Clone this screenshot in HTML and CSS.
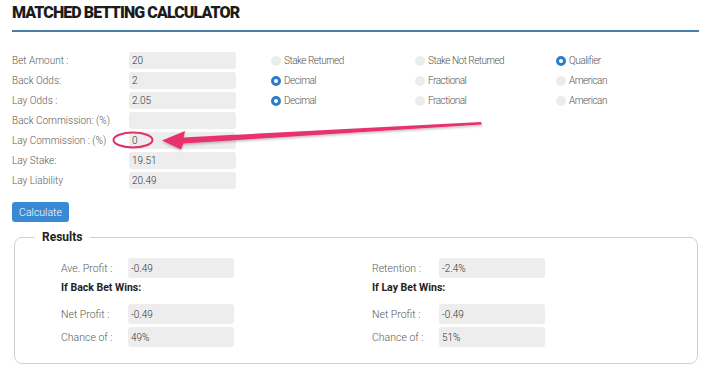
FILE: index.html
```html
<!DOCTYPE html>
<html lang="en">
<head>
    <meta charset="UTF-8">
    <title>Matched Betting Calculator</title>
    <link rel="stylesheet" href="styles.css">
</head>
<body>
    <div class="calculator">
        <h1 class="title">MATCHED BETTING CALCULATOR</h1>

        <div class="inputs">
            <div class="row">
                <label>Bet Amount :</label>
                <input type="text" class="field" value="20">
                <div class="options">
                    <span class="option"><span class="radio"></span>Stake Returned</span>
                    <span class="option"><span class="radio"></span>Stake Not Returned</span>
                    <span class="option"><span class="radio checked"></span>Qualifier</span>
                </div>
            </div>
            <div class="row">
                <label>Back Odds:</label>
                <input type="text" class="field" value="2">
                <div class="options">
                    <span class="option"><span class="radio checked"></span>Decimal</span>
                    <span class="option"><span class="radio"></span>Fractional</span>
                    <span class="option"><span class="radio"></span>American</span>
                </div>
            </div>
            <div class="row">
                <label>Lay Odds :</label>
                <input type="text" class="field" value="2.05">
                <div class="options">
                    <span class="option"><span class="radio checked"></span>Decimal</span>
                    <span class="option"><span class="radio"></span>Fractional</span>
                    <span class="option"><span class="radio"></span>American</span>
                </div>
            </div>
            <div class="row">
                <label>Back Commission: (%)</label>
                <input type="text" class="field" value="">
            </div>
            <div class="row">
                <label>Lay Commission : (%)</label>
                <input type="text" class="field" value="0">
            </div>
            <div class="row">
                <label>Lay Stake:</label>
                <input type="text" class="field" value="19.51">
            </div>
            <div class="row">
                <label>Lay Liability</label>
                <input type="text" class="field" value="20.49">
            </div>
        </div>

        <button class="calc-button">Calculate</button>

        <fieldset class="results">
            <legend>Results</legend>
            <div class="results-grid">
                <div class="result-col">
                    <div class="result-row">
                        <label>Ave. Profit :</label>
                        <input type="text" class="field" value="-0.49">
                    </div>
                    <h4>If Back Bet Wins:</h4>
                    <div class="result-row">
                        <label>Net Profit :</label>
                        <input type="text" class="field" value="-0.49">
                    </div>
                    <div class="result-row">
                        <label>Chance of :</label>
                        <input type="text" class="field" value="49%">
                    </div>
                </div>
                <div class="result-col">
                    <div class="result-row">
                        <label>Retention :</label>
                        <input type="text" class="field" value="-2.4%">
                    </div>
                    <h4>If Lay Bet Wins:</h4>
                    <div class="result-row">
                        <label>Net Profit :</label>
                        <input type="text" class="field" value="-0.49">
                    </div>
                    <div class="result-row">
                        <label>Chance of :</label>
                        <input type="text" class="field" value="51%">
                    </div>
                </div>
            </div>
        </fieldset>
    </div>

    <!-- annotation drawn over the screenshot -->
    <svg class="annotation" width="710" height="370" viewBox="0 0 710 370">
        <defs>
            <filter id="shadow" x="-10%" y="-50%" width="120%" height="200%">
                <feDropShadow dx="0" dy="1.5" stdDeviation="1.2" flood-color="#000" flood-opacity="0.25"/>
            </filter>
        </defs>
        <ellipse cx="133" cy="140" rx="19.5" ry="7.5" fill="none" stroke="#e3306a" stroke-width="2"/>
        <polygon filter="url(#shadow)" fill="#e8336c"
            points="162,140.5 185,131 183.5,137.5 481,122 482,124.5 183.5,143.5 181,149.5"/>
    </svg>
</body>
</html>
```

FILE: styles.css
```css
body {
    margin: 0;
    background: #fff;
    font-family: Roboto, "Liberation Sans", sans-serif;
    color: #5a5a5a;
    position: relative;
}

.calculator {
    width: 687px;
    margin-left: 12px;
}

.title {
    margin: 0;
    padding: 3px 0 7px;
    font-size: 16px;
    line-height: 20px;
    font-weight: 900;
    letter-spacing: -0.9px;
    color: #1b1b1b;
    border-bottom: 2px solid #4a7fa9;
}

.inputs {
    margin-top: 20px;
    display: flex;
    flex-direction: column;
    gap: 3px;
}

.row {
    display: flex;
    align-items: center;
    height: 17px;
}

.row label {
    width: 117px;
    font-size: 10px;
    font-weight: 300;
}

.field {
    box-sizing: border-box;
    width: 107px;
    height: 17px;
    border: none;
    border-radius: 3px;
    background: #ededed;
    padding: 0 3px;
    font-family: Roboto, "Liberation Sans", sans-serif;
    font-size: 10px;
    font-weight: 300;
    color: #333;
    outline: none;
}

.options {
    display: grid;
    grid-template-columns: 144px 141px auto;
    margin-left: 35px;
}

.option {
    display: flex;
    align-items: center;
    gap: 3px;
    font-size: 10px;
    font-weight: 300;
    letter-spacing: -0.5px;
    color: #555;
}

.radio {
    width: 10px;
    height: 10px;
    border-radius: 50%;
    background: #ececec;
    box-sizing: border-box;
}

.radio.checked {
    background: #fff;
    border: 3px solid #2d7ccb;
}

.calc-button {
    display: block;
    margin-top: 13px;
    width: 57px;
    height: 20px;
    padding: 0;
    border: none;
    border-radius: 3px;
    background: #3a89d4;
    color: #fff;
    font-family: Roboto, "Liberation Sans", sans-serif;
    font-size: 10.5px;
    font-weight: 300;
}

.results {
    margin: 8px 0 0 2px;
    width: 684px;
    box-sizing: border-box;
    padding: 0 0 16px 46px;
    border: 1px solid #cfcfcf;
    border-radius: 8px;
}

.results legend {
    margin-left: -27px;
    padding: 0 8px;
    font-size: 12px;
    line-height: 14px;
    font-weight: bold;
    color: #222;
}

.results-grid {
    display: grid;
    grid-template-columns: 311px 1fr;
    padding-top: 14px;
}

.result-col {
    display: flex;
    flex-direction: column;
}

.result-row {
    display: flex;
    align-items: center;
    height: 20px;
    margin-bottom: 3px;
}

.result-row label {
    width: 67px;
    font-size: 10.5px;
    font-weight: 300;
}

.result-row .field {
    width: 106px;
    height: 20px;
}

.result-col h4 {
    margin: 3px 0 9px;
    font-size: 10.5px;
    line-height: 14px;
    color: #1e1e1e;
}

.result-col .result-row:first-child,
.result-col .result-row:last-child {
    margin-bottom: 0;
}

.annotation {
    position: absolute;
    top: 0;
    left: 0;
    pointer-events: none;
}
```
